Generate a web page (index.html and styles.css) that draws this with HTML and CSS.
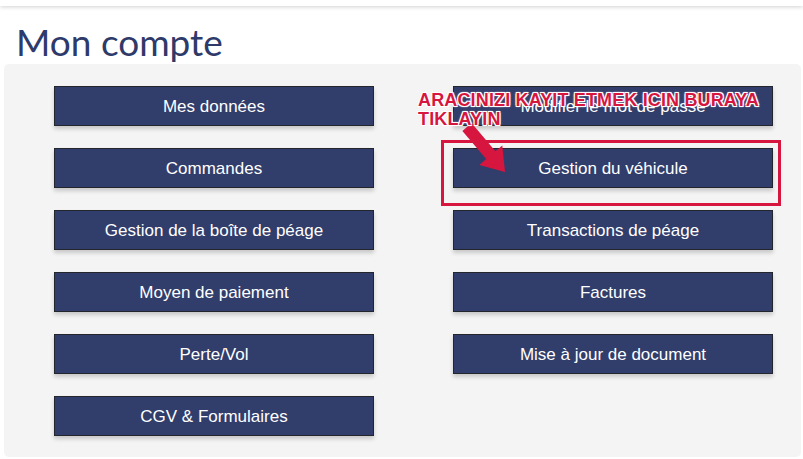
FILE: index.html
```html
<!DOCTYPE html>
<html lang="fr">
<head>
  <meta charset="UTF-8">
  <title>Mon compte</title>
  <link rel="stylesheet" href="styles.css">
</head>
<body>
  <div class="topbar"></div>
  <h1>Mon compte</h1>

  <div class="panel">
    <div class="menu">
      <a class="menu-btn" href="#">Mes données</a>
      <a class="menu-btn" href="#">Modifier le mot de passe</a>
      <a class="menu-btn" href="#">Commandes</a>
      <a class="menu-btn" href="#">Gestion du véhicule</a>
      <a class="menu-btn" href="#">Gestion de la boîte de péage</a>
      <a class="menu-btn" href="#">Transactions de péage</a>
      <a class="menu-btn" href="#">Moyen de paiement</a>
      <a class="menu-btn" href="#">Factures</a>
      <a class="menu-btn" href="#">Perte/Vol</a>
      <a class="menu-btn" href="#">Mise à jour de document</a>
      <a class="menu-btn" href="#">CGV &amp; Formulaires</a>
    </div>

    <!-- annotation overlay -->
    <div class="highlight-box"></div>
    <svg class="arrow" width="520" height="120" viewBox="0 0 520 120">
      <polygon points="458.4,66.9 467.6,59.1 491.4,87.3 498.3,81.5 501,108 475.3,100.9 482.2,95.1" fill="#d6163f"/>
    </svg>
    <div class="note">ARACINIZI KAYIT ETMEK ICIN BURAYA<br>TIKLAYIN</div>
  </div>
</body>
</html>
```

FILE: styles.css
```css
:root {
  --navy: #313d6b;
  --title: #2e3a6a;
  --panel: #f4f4f4;
  --alert: #d6163f;
}

body {
  margin: 0;
  background: #fff;
  font-family: 'Liberation Sans', Arial, sans-serif;
}

.topbar {
  height: 6px;
  background: #fff;
  box-shadow: 0 1px 4px rgba(0, 0, 0, 0.18);
}

h1 {
  margin: 13px 0 0 16px;
  font-family: 'Lato', 'DejaVu Sans', sans-serif;
  font-weight: 400;
  font-size: 37px;
  line-height: 45px;
  color: var(--title);
}

.panel {
  position: relative;
  margin: 0 2px 0 4px;
  padding: 22px 0 21px 50px;
  background: var(--panel);
  border-radius: 5px;
}

.menu {
  display: grid;
  grid-template-columns: 320px 320px;
  column-gap: 79px;
  row-gap: 22px;
}

.menu-btn {
  display: flex;
  align-items: center;
  justify-content: center;
  box-sizing: border-box;
  height: 40px;
  padding-top: 2px;
  border: 1px solid #24262e;
  background: var(--navy);
  color: #fff;
  font-size: 17px;
  text-decoration: none;
  box-shadow: 0 3px 4px rgba(0, 0, 0, 0.18);
}

.highlight-box {
  position: absolute;
  left: 437px;
  top: 76px;
  width: 334px;
  height: 60px;
  border: 3px solid var(--alert);
}

.arrow {
  position: absolute;
  left: 0;
  top: 0;
}

.note {
  position: absolute;
  left: 414px;
  top: 27px;
  font-size: 18px;
  line-height: 19px;
  letter-spacing: 0.15px;
  font-weight: 700;
  color: var(--alert);
  text-shadow: 1px 1px 0 #fff, -1px -1px 0 #fff, 1px -1px 0 #fff, -1px 1px 0 #fff,
               0 0 3px #fbd9e0, 0 0 2px #fff;
}
```
